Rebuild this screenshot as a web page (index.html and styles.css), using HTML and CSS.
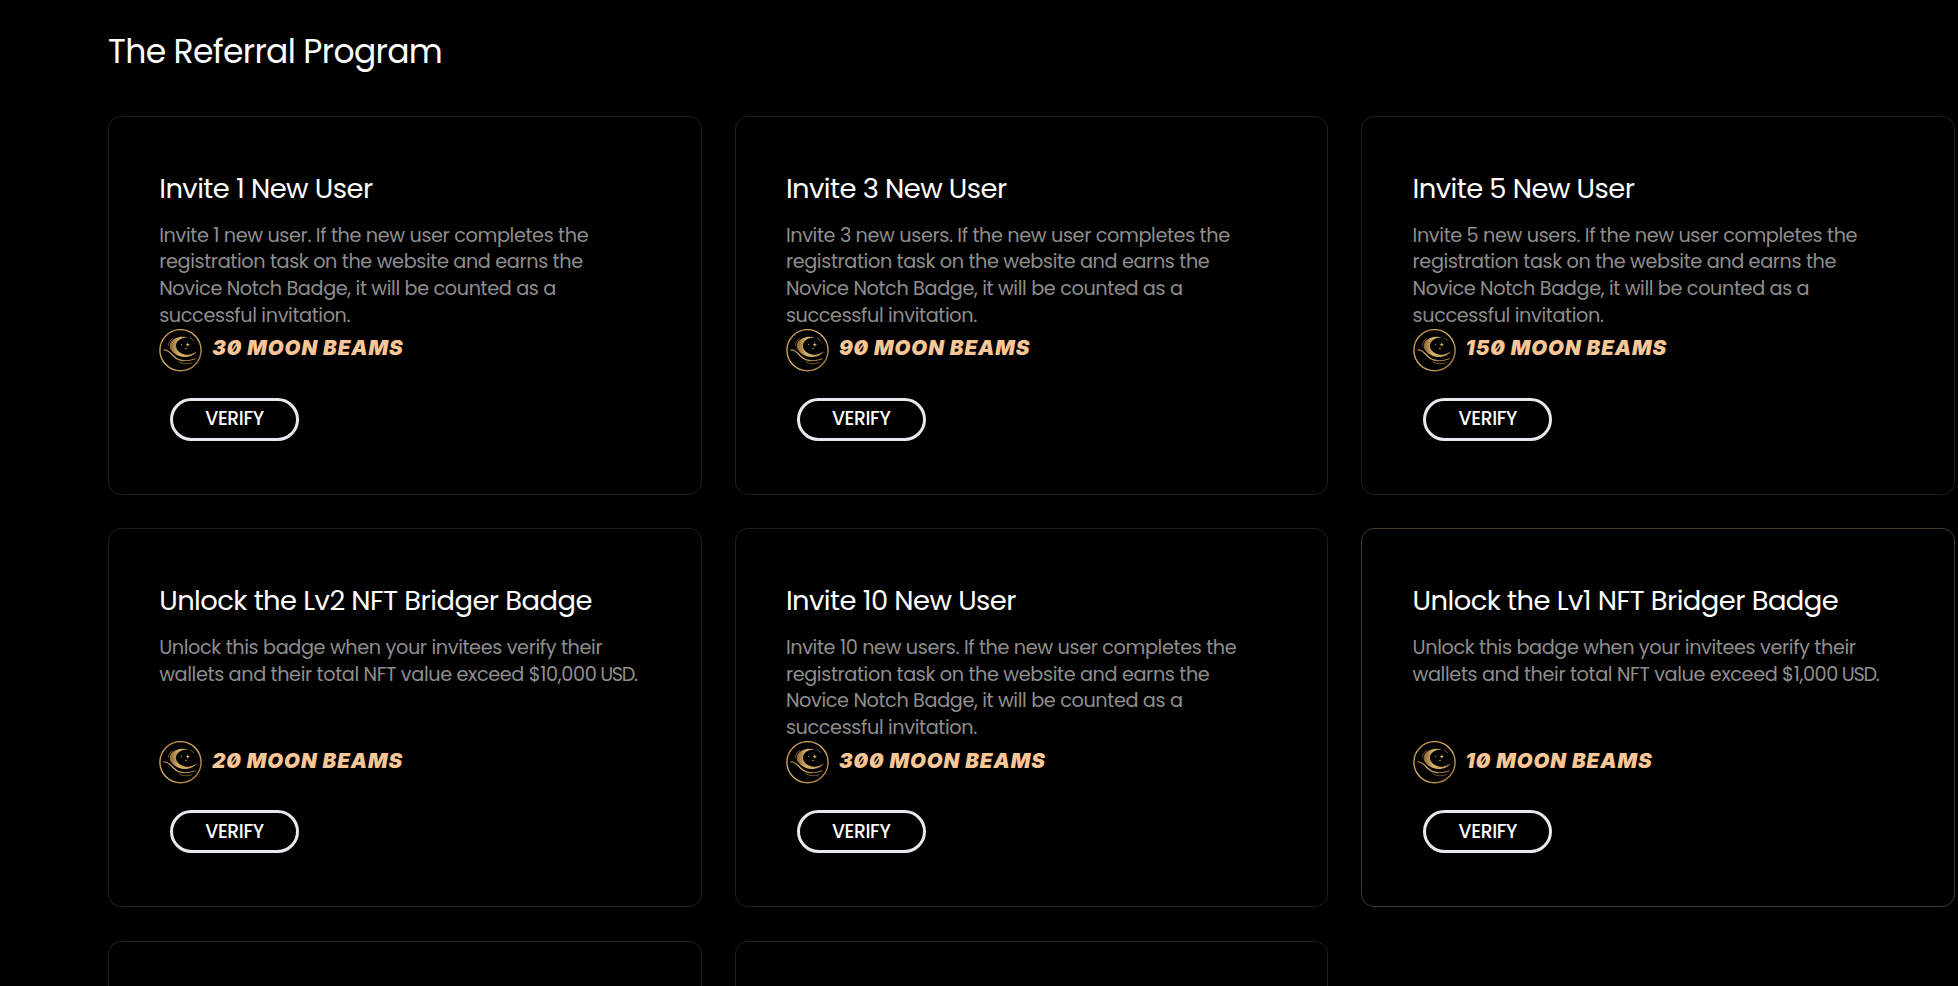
FILE: index.html
```html
<!DOCTYPE html>
<html lang="en">
<head>
<meta charset="utf-8">
<title>The Referral Program</title>
<link rel="stylesheet" href="styles.css">
</head>
<body>
<svg class="defs" width="0" height="0" aria-hidden="true">
  <defs>
    <linearGradient id="gold" x1="0" y1="0" x2="1" y2="1">
      <stop offset="0" stop-color="#b98a45"/><stop offset=".5" stop-color="#d6b26a"/><stop offset="1" stop-color="#9a6a35"/>
    </linearGradient>
    <linearGradient id="crescent" x1="0" y1="0" x2="1" y2="0">
      <stop offset="0" stop-color="#8a6230"/><stop offset=".35" stop-color="#d6b26a"/><stop offset="1" stop-color="#b98a45"/>
    </linearGradient>
    <symbol id="moon" viewBox="0 0 43 43">
      <circle cx="21.500" cy="21.200" r="20.600" fill="none" stroke="url(#gold)" stroke-width="1.400"/>
      <path d="M29 8.500C22 6.300 14.500 8.500 11.500 13.500C10 17 10.500 20 12.500 21.500C15.500 25.500 20.500 28 26 28C31 28 35.500 25.800 37.800 22.500C34 25 30 26.200 26 25.500C20.500 24.500 17 20.800 17 16.800C17 12 22 8.500 29 8.500Z" fill="url(#crescent)"/>
      <path d="M4.500 21C9 20.500 11 23.500 14.500 27C19 31.500 26 33.500 36.500 29.800" fill="none" stroke="url(#gold)" stroke-width="1.200"/>
      <path d="M19.500 32.500C23.500 35 28 35.500 33.500 33.500M14 9.500C11 11 9.500 13.500 9.500 16.500M31 9C33 9.800 34 10.800 34.500 12" fill="none" stroke="#a87b40" stroke-width=".7"/>
      <path d="M28.800 13.300L29.400 15L31 15.600L29.400 16.200L28.800 18L28.200 16.200L26.600 15.600L28.200 15Z" fill="#dcb76c"/>
      <circle cx="22.500" cy="15.500" r=".7" fill="#a87b40"/><circle cx="27" cy="19.500" r=".8" fill="#c79a4c"/>
    </symbol>
  </defs>
</svg>
<main class="page">
  <h1 class="heading">The Referral Program</h1>
  <section class="grid">
    <article class="card">
      <h2 class="title">Invite 1 New User</h2>
      <p class="desc">Invite 1 new user. If the new user completes the<br>registration task on the website and earns the<br>Novice Notch Badge, it will be counted as a<br>successful invitation.</p>
      <div class="reward"><svg class="moon"><use href="#moon"/></svg><span class="beams">30 MOON BEAMS</span></div>
      <button class="verify">VERIFY</button>
    </article>
    <article class="card">
      <h2 class="title">Invite 3 New User</h2>
      <p class="desc">Invite 3 new users. If the new user completes the<br>registration task on the website and earns the<br>Novice Notch Badge, it will be counted as a<br>successful invitation.</p>
      <div class="reward"><svg class="moon"><use href="#moon"/></svg><span class="beams">90 MOON BEAMS</span></div>
      <button class="verify">VERIFY</button>
    </article>
    <article class="card">
      <h2 class="title">Invite 5 New User</h2>
      <p class="desc">Invite 5 new users. If the new user completes the<br>registration task on the website and earns the<br>Novice Notch Badge, it will be counted as a<br>successful invitation.</p>
      <div class="reward"><svg class="moon"><use href="#moon"/></svg><span class="beams">150 MOON BEAMS</span></div>
      <button class="verify">VERIFY</button>
    </article>
    <article class="card">
      <h2 class="title">Unlock the Lv2 NFT Bridger Badge</h2>
      <p class="desc">Unlock this badge when your invitees verify their<br>wallets and their total NFT value exceed $10,000<span class="currency"> USD.</span></p>
      <div class="reward"><svg class="moon"><use href="#moon"/></svg><span class="beams">20 MOON BEAMS</span></div>
      <button class="verify">VERIFY</button>
    </article>
    <article class="card">
      <h2 class="title">Invite 10 New User</h2>
      <p class="desc">Invite 10 new users. If the new user completes the<br>registration task on the website and earns the<br>Novice Notch Badge, it will be counted as a<br>successful invitation.</p>
      <div class="reward"><svg class="moon"><use href="#moon"/></svg><span class="beams">300 MOON BEAMS</span></div>
      <button class="verify">VERIFY</button>
    </article>
    <article class="card card-active">
      <h2 class="title">Unlock the Lv1 NFT Bridger Badge</h2>
      <p class="desc">Unlock this badge when your invitees verify their<br>wallets and their total NFT value exceed $1,000<span class="currency"> USD.</span></p>
      <div class="reward"><svg class="moon"><use href="#moon"/></svg><span class="beams">10 MOON BEAMS</span></div>
      <button class="verify">VERIFY</button>
    </article>
    <article class="card"></article>
    <article class="card"></article>
  </section>
</main>
</body>
</html>
```

FILE: styles.css
```css
* { box-sizing: border-box; }
html, body { margin: 0; height: 986px; overflow: hidden; background: #000; }
body { font-family: Poppins, Inter, sans-serif; color: #fff; }
.defs { position: absolute; }
.page { height: 986px; overflow: hidden; padding: 28px 3px 0 108px; }
.heading { margin: 0 0 40px; font-size: 33px; font-weight: 400; line-height: 48px; letter-spacing: -.02em; }
.grid { display: grid; grid-template-columns: repeat(3, 593.8px); grid-auto-rows: 379px; column-gap: 32.9px; row-gap: 33.4px; }
.card { border: 1px solid #1e1e1e; border-radius: 13px; padding: 51px 50px 0 50.2px; }
.card-active { border-color: #453a2e; }
.title { margin: 0 0 12.8px; font-size: 27.4px; font-weight: 400; line-height: 42px; letter-spacing: -.02em; white-space: nowrap; }
.desc { margin: 0; height: 106.4px; font-size: 19.27px; font-weight: 400; line-height: 26.6px; letter-spacing: -.02em; color: #8e8e8e; white-space: nowrap; }
.currency { letter-spacing: -.07em; }
.reward { display: flex; align-items: center; gap: 10px; height: 43px; margin-top: -.5px; }
.moon { width: 43px; height: 43px; flex: none; }
.beams { padding-bottom: 4px; color: #f9c797; font-family: Inter, sans-serif; font-size: 20.5px; font-weight: 900; font-style: italic; line-height: 24px; font-feature-settings: "zero"; letter-spacing: .9px; white-space: nowrap; }
.verify { display: block; width: 129px; height: 43px; margin: 26.2px 0 0 10.8px; padding: 0; border: 3px solid #e8e8ee; border-radius: 22px; background: transparent; color: #fff; font: 500 18.8px/36px Poppins, Inter, sans-serif; letter-spacing: -.02em; }
```
